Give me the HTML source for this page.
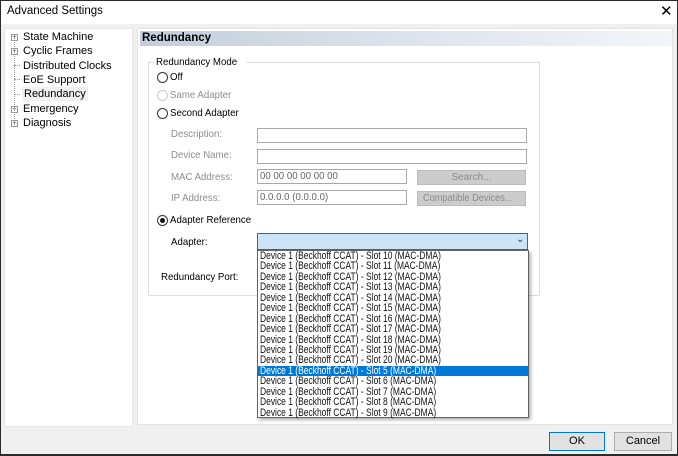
<!DOCTYPE html>
<html><head><style>
*{margin:0;padding:0;box-sizing:border-box}
body{width:678px;height:456px;background:#f0f0f0;font-family:"Liberation Sans",sans-serif;font-size:11px;color:#000;position:relative;overflow:hidden}
.a{position:absolute;white-space:nowrap}
.g{color:#8d8d8d}
.in{position:absolute;background:#fff;border:1px solid #a8a8a8;height:15px}
.btn{position:absolute;background:#ccc;border:1px solid #bcbcbc;color:#8a8a8a;text-align:center;line-height:13px;font-size:10px}
.rad{position:absolute;width:11px;height:11px;border:1px solid #333;border-radius:50%;background:#fff}
.pl{position:absolute;width:7px;height:7px;border:1px solid #999;font-size:7px;line-height:5px;text-align:center;color:#333;background:#fff}
.dl{position:absolute;border-top:1px dotted #999;width:6px}
.li{height:10.45px;line-height:10.45px;padding-left:2px;font-size:11px;color:#111}
.li span{display:inline-block;transform:scaleX(0.77);transform-origin:0 0}
.c{display:inline-block;transform:scaleX(0.92);transform-origin:0 0}
</style></head><body>
<div class="a" style="left:0;top:0;width:678px;height:456px;border:1px solid #2b2b2b;border-bottom:2px solid #2b2b2b;z-index:9;pointer-events:none"></div>
<div class="a" style="left:0;top:0;width:678px;height:24px;background:#fff"></div>
<div class="a" style="left:7px;top:5px;font-size:11.5px">Advanced Settings</div>
<div class="a" style="left:660px;top:2px;font-size:15px">✕</div>

<div class="a" style="left:4px;top:28px;width:129px;height:399px;background:#fff;border:1px solid #e6e6e6"></div>
<div class="a" style="left:137px;top:28px;width:536px;height:397px;background:#fff;border:1px solid #e3e3e3"></div>

<div class="pl" style="left:11px;top:34px">+</div><div class="a" style="left:23px;top:31px">State Machine</div>
<div class="pl" style="left:11px;top:48px">+</div><div class="a" style="left:23px;top:45px">Cyclic Frames</div>
<div class="dl" style="left:14px;top:65px"></div><div class="a" style="left:23px;top:60px">Distributed Clocks</div>
<div class="dl" style="left:14px;top:79px"></div><div class="a" style="left:23px;top:74px">EoE Support</div>
<div class="dl" style="left:14px;top:94px"></div><div class="a" style="left:22px;top:87px;background:#f0f0f0;padding:1px 2px">Redundancy</div>
<div class="pl" style="left:11px;top:106px">+</div><div class="a" style="left:23px;top:103px">Emergency</div>
<div class="pl" style="left:11px;top:120px">+</div><div class="a" style="left:23px;top:117px">Diagnosis</div>
<div class="a" style="left:14px;top:37px;height:88px;border-left:1px dotted #999"></div>

<div class="a" style="left:140px;top:31px;width:532px;height:15px;background:linear-gradient(90deg,#c3cddb,#dde3eb 50%,#f3f5f8)"></div>
<div class="a" style="left:142px;top:32px;font-weight:bold;font-size:11.5px">Redundancy</div>

<div class="a" style="left:148px;top:62px;width:392px;height:234px;border:1px solid #dcdcdc"></div>
<div class="a" style="left:154px;top:56px;background:#fff;padding:0 2px;font-size:10.5px"><span class="c">Redundancy Mode</span></div>

<div class="rad" style="left:157px;top:72px"></div><div class="a" style="left:170px;top:71px;font-size:10.5px"><span class="c">Off</span></div>
<div class="rad" style="left:157px;top:90px;border-color:#ccc"></div><div class="a g" style="left:170px;top:89px;font-size:10.5px"><span class="c">Same Adapter</span></div>
<div class="rad" style="left:157px;top:108px"></div><div class="a" style="left:170px;top:107px;font-size:10.5px"><span class="c">Second Adapter</span></div>

<div class="a g" style="left:171px;top:128px;font-size:10.5px"><span class="c">Description:</span></div><div class="in" style="left:257px;top:128px;width:270px"></div>
<div class="a g" style="left:171px;top:149px;font-size:10.5px"><span class="c">Device Name:</span></div><div class="in" style="left:257px;top:149px;width:270px"></div>
<div class="a g" style="left:171px;top:171px;font-size:10.5px"><span class="c">MAC Address:</span></div><div class="in" style="left:257px;top:169px;width:150px;color:#666;font-size:10.5px;padding-left:2px;line-height:13px"><span class="c">00 00 00 00 00 00</span></div>
<div class="btn" style="left:417px;top:170px;width:109px;height:15px">Search...</div>
<div class="a g" style="left:171px;top:192px;font-size:10.5px"><span class="c">IP Address:</span></div><div class="in" style="left:257px;top:190px;width:150px;color:#666;font-size:10.5px;padding-left:2px;line-height:13px"><span class="c">0.0.0.0 (0.0.0.0)</span></div>
<div class="btn" style="left:417px;top:191px;width:109px;height:15px"><span class="c">Compatible Devices...</span></div>

<div class="rad" style="left:157px;top:215px"></div><div class="a" style="left:160px;top:218px;width:5px;height:5px;border-radius:50%;background:#111"></div>
<div class="a" style="left:170px;top:214px;font-size:10.5px"><span class="c">Adapter Reference</span></div>
<div class="a" style="left:171px;top:236px;font-size:10.5px"><span class="c">Adapter:</span></div>
<div class="a" style="left:257px;top:233px;width:271px;height:17px;background:#cce4f7;border:1px solid #0078d7"></div>
<div class="a" style="left:516px;top:234px;font-size:10px;color:#333">⌄</div>
<div class="a" style="left:161px;top:271px;font-size:10.5px"><span class="c">Redundancy Port:</span></div>

<div class="a" style="left:257px;top:250px;width:272px;height:168px;background:#fff;border:1px solid #646464;box-shadow:2px 2px 3px rgba(0,0,0,.3)">
<div class="li"><span>Device 1 (Beckhoff CCAT) - Slot 10 (MAC-DMA)</span></div>
<div class="li"><span>Device 1 (Beckhoff CCAT) - Slot 11 (MAC-DMA)</span></div>
<div class="li"><span>Device 1 (Beckhoff CCAT) - Slot 12 (MAC-DMA)</span></div>
<div class="li"><span>Device 1 (Beckhoff CCAT) - Slot 13 (MAC-DMA)</span></div>
<div class="li"><span>Device 1 (Beckhoff CCAT) - Slot 14 (MAC-DMA)</span></div>
<div class="li"><span>Device 1 (Beckhoff CCAT) - Slot 15 (MAC-DMA)</span></div>
<div class="li"><span>Device 1 (Beckhoff CCAT) - Slot 16 (MAC-DMA)</span></div>
<div class="li"><span>Device 1 (Beckhoff CCAT) - Slot 17 (MAC-DMA)</span></div>
<div class="li"><span>Device 1 (Beckhoff CCAT) - Slot 18 (MAC-DMA)</span></div>
<div class="li"><span>Device 1 (Beckhoff CCAT) - Slot 19 (MAC-DMA)</span></div>
<div class="li"><span>Device 1 (Beckhoff CCAT) - Slot 20 (MAC-DMA)</span></div>
<div class="li" style="background:#0078d7;color:#fff"><span>Device 1 (Beckhoff CCAT) - Slot 5 (MAC-DMA)</span></div>
<div class="li"><span>Device 1 (Beckhoff CCAT) - Slot 6 (MAC-DMA)</span></div>
<div class="li"><span>Device 1 (Beckhoff CCAT) - Slot 7 (MAC-DMA)</span></div>
<div class="li"><span>Device 1 (Beckhoff CCAT) - Slot 8 (MAC-DMA)</span></div>
<div class="li"><span>Device 1 (Beckhoff CCAT) - Slot 9 (MAC-DMA)</span></div>
</div>

<div class="a" style="left:549px;top:432px;width:56px;height:19px;background:#e1e1e1;border:1px solid #0078d7;text-align:center;line-height:17px">OK</div>
<div class="a" style="left:614px;top:432px;width:58px;height:19px;background:#e1e1e1;border:1px solid #adadad;text-align:center;line-height:17px">Cancel</div>
</body></html>
